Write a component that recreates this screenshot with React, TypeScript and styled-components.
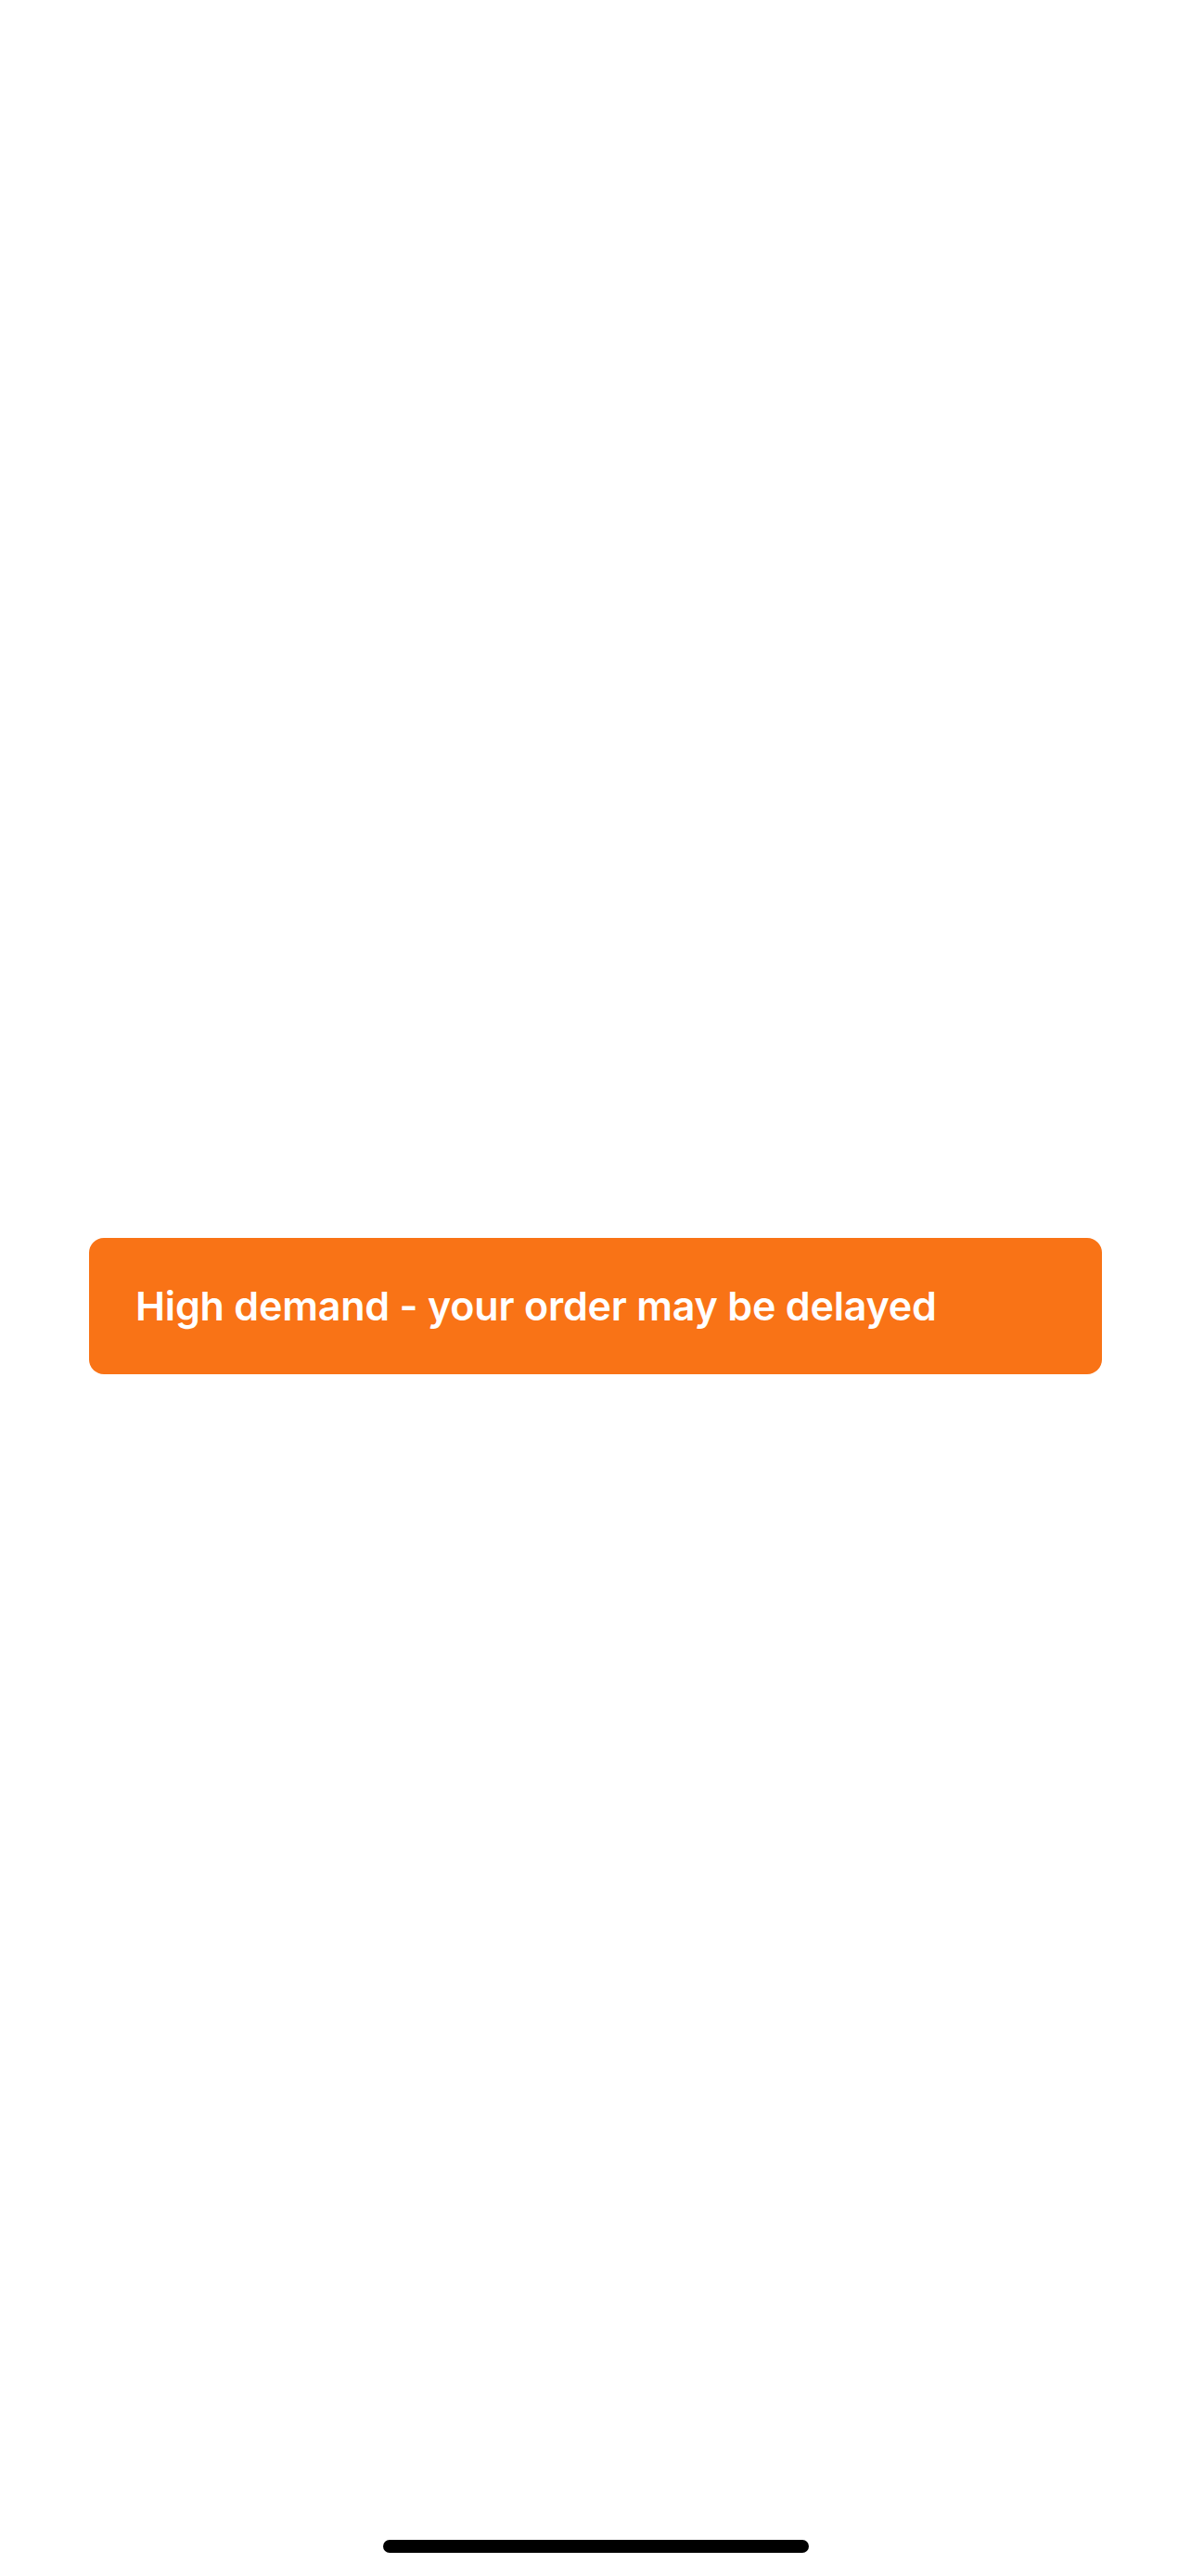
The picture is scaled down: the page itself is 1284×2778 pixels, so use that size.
import React from 'react';
import styled, { createGlobalStyle } from 'styled-components';

const GlobalStyle = createGlobalStyle`
  html, body {
    margin: 0;
    padding: 0;
    background: #fff;
  }
  body {
    font-family: Inter, "Noto Sans", "Liberation Sans", sans-serif;
  }
`;

const Screen = styled.div`
  width: 1284px;
  height: 2778px;
  display: flex;
  flex-direction: column;
  background: #fff;
`;

const Body = styled.div`
  flex: 1;
  padding-top: 1335px;
`;

const Banner = styled.div<{ $tone: string }>`
  margin: 0 96px;
  height: 147px;
  box-sizing: border-box;
  border-radius: 16px;
  background: ${(p) => p.$tone};
  display: flex;
  align-items: center;
  padding: 0 50px;
`;

const BannerText = styled.span`
  color: #fff;
  font-size: 43px;
  font-weight: 600;
  letter-spacing: -0.2px;
  line-height: 1;
`;

const HomeBar = styled.div`
  display: flex;
  justify-content: center;
  padding-bottom: 25px;
`;

const HomeIndicator = styled.div`
  width: 459px;
  height: 14px;
  border-radius: 7px;
  background: #000;
`;

export default function App() {
  return (
    <>
      <GlobalStyle />
      <Screen>
        <Body>
          <Banner $tone="#f97316">
            <BannerText>High demand - your order may be delayed</BannerText>
          </Banner>
        </Body>
        <HomeBar>
          <HomeIndicator />
        </HomeBar>
      </Screen>
    </>
  );
}
